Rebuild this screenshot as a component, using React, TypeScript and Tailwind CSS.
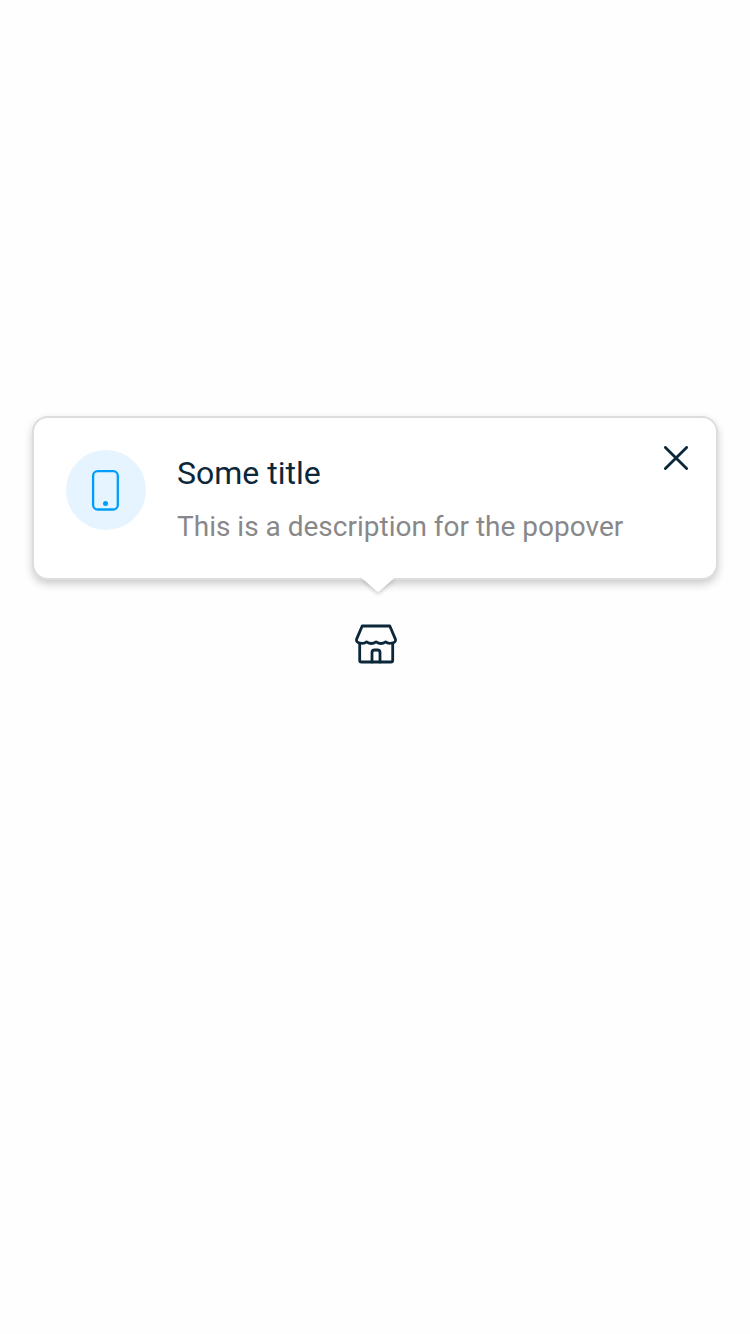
import React from "react";

function PhoneIcon() {
  return (
    <svg width="80" height="80" viewBox="0 0 80 80" fill="none" aria-hidden="true">
      <rect x="27.1" y="21.1" width="24.7" height="38.4" rx="4.6" stroke="#009EF8" strokeWidth="2.3" />
      <circle cx="39.5" cy="53.4" r="2.5" fill="#009EF8" />
    </svg>
  );
}

function CloseIcon() {
  return (
    <svg width="24" height="24" viewBox="0 0 24 24" fill="none" aria-hidden="true">
      <path d="M1.4 1.4 22.6 22.6M22.6 1.4 1.4 22.6" stroke="#0B2739" strokeWidth="2.8" strokeLinecap="round" />
    </svg>
  );
}

function StoreIcon() {
  return (
    <svg
      width="48"
      height="48"
      viewBox="0 0 48 48"
      fill="none"
      stroke="#0B2739"
      strokeWidth="2.8"
      strokeLinecap="round"
      strokeLinejoin="round"
      aria-hidden="true"
    >
      <path d="M10.2 6H37.8L43.5 19.4C44 21.2 42.3 23 40 23C37.4 23.8 35.4 23.4 33.6 21.9C30.6 24 27.2 24 24.1 21.9C21 24 17.6 24 14.6 21.9C12.7 23.4 10.6 23.8 8 23C5.7 23 4 21.2 4.5 19.4Z" />
      <path d="M8 23.5V40.2Q8 42 9.8 42H39.2Q41 42 41 40.2V23.5" transform="translate(-0.3 0)" />
      <path d="M20 42V32.5Q20 30 22.5 30H25.5Q28 30 28 32.5V42" />
    </svg>
  );
}

export default function App() {
  return (
    <main className="flex min-h-screen flex-col items-center bg-[#fefefe] px-8 pt-[416px] font-['Roboto',sans-serif]">
      <section className="relative flex h-[164px] w-[686px] rounded-2xl border-2 border-[#dddddd] bg-white pt-8 pl-8 shadow-[0_4px_8px_rgba(0,0,0,0.2)]">
        <div className="size-20 shrink-0 rounded-full bg-[#e5f4fe]">
          <PhoneIcon />
        </div>
        <div className="ml-[31px] flex-1 pt-[3px]">
          <h1 className="text-[32px] leading-10 text-[#0b2739]">Some title</h1>
          <p className="mt-4 text-[28px] leading-9 whitespace-nowrap text-[#88888a]">
            This is a description for the popover
          </p>
        </div>
        <button type="button" aria-label="Close" className="-mt-1 mr-7 size-6">
          <CloseIcon />
        </button>
        <div className="absolute top-[160px] left-[315px] h-7 w-[58px] overflow-hidden">
          <svg
            className="ml-2 overflow-visible drop-shadow-[0_2px_2px_rgba(0,0,0,0.2)]"
            width="42"
            height="16"
            viewBox="0 0 42 16"
            aria-hidden="true"
          >
            <path d="M4.5 0H37.5L35 2L23 12.8Q21 14.6 19 12.8L7 2Z" fill="#fff" />
          </svg>
        </div>
      </section>
      <div className="mt-10 ml-0.5">
        <StoreIcon />
      </div>
    </main>
  );
}
